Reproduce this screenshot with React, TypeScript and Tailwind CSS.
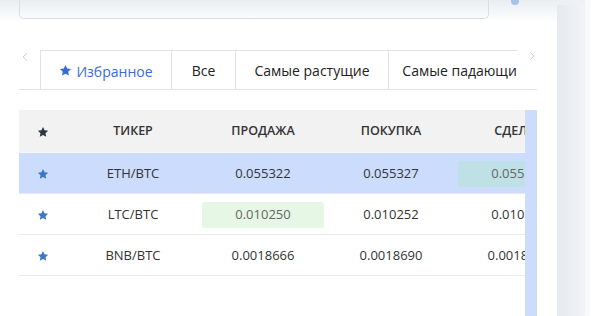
import { ReactNode } from "react";

const Star = ({ className }: { className: string }) => (
  <svg viewBox="0 0 24 24" className={className} fill="currentColor">
    <path d="M12 1.8l3.1 6.6 7.2.9-5.3 5 1.4 7.1L12 17.9l-6.4 3.5 1.4-7.1-5.3-5 7.2-.9z" />
  </svg>
);

const tabs = [
  { label: "Избранное", w: "w-[132px]", active: true },
  { label: "Все", w: "w-[64px]" },
  { label: "Самые растущие", w: "w-[153px]" },
  { label: "Самые падающие", w: "w-[150px]" },
];

type Row = {
  pair: string;
  sell: string;
  buy: string;
  deal: string;
  selected?: boolean;
  sellHi?: boolean;
  dealHi?: boolean;
};

const rows: Row[] = [
  { pair: "ETH/BTC", sell: "0.055322", buy: "0.055327", deal: "0.055325", selected: true, dealHi: true },
  { pair: "LTC/BTC", sell: "0.010250", buy: "0.010252", deal: "0.010251", sellHi: true },
  { pair: "BNB/BTC", sell: "0.0018666", buy: "0.0018690", deal: "0.0018680" },
];

const Cell = ({ w, children, hi }: { w: string; children: ReactNode; hi?: string }) => (
  <div className={`${w} shrink-0 flex items-center justify-center px-[3px]`}>
    {hi ? (
      <div className={`w-full h-[26px] rounded-[3px] flex items-center justify-center text-[#666] ${hi}`}>
        {children}
      </div>
    ) : (
      children
    )}
  </div>
);

export default function App() {
  return (
    <div
      className="w-[591px] h-[316px] overflow-hidden flex bg-white text-[#333]"
      style={{ fontFamily: '"Open Sans", "Noto Sans", sans-serif' }}
    >
      <div className="w-[557px] shrink-0 flex flex-col">
        {/* top bar with search field */}
        <div className="h-[22px] bg-gradient-to-b from-[#e9edf1] to-white flex items-end pl-[19px]">
          <div className="relative w-[470px] h-[24px] -mt-[2px] border border-[#dadde2] border-t-0 rounded-b-[5px] mb-[3px]">
            <div className="absolute left-[29px] -top-[1px] w-[5px] h-[3px] rounded-b-full bg-[#b9c4d2]" />
          </div>
          <div className="relative w-[10px] h-[22px] ml-[22px]">
            <div className="absolute left-[0px] top-[0px] w-[8px] h-[5px] rounded-b-full bg-[#a9c2ea]" />
          </div>
        </div>

        {/* tabs */}
        <div className="mt-[28px] ml-[19px] w-[518px] h-[40px] flex border-b border-[#dfe2e7]">
          <div className="w-[21px] shrink-0 flex items-start justify-start pt-[2px] pl-[3px]">
            <svg viewBox="0 0 8 12" className="w-[6px] h-[10px] text-[#b6bcc6]" fill="none" stroke="currentColor" strokeWidth="1">
              <path d="M6.5 1L1.5 6l5 5" />
            </svg>
          </div>
          <div className="w-[477px] shrink-0 overflow-hidden flex">
            {tabs.map((t, i) => (
              <div
                key={t.label}
                className={`${t.w} shrink-0 h-[40px] flex items-center justify-center gap-[4px] text-[14px] border-t border-r border-[#dfe2e7] ${
                  i === 0 ? "border-l bg-white text-[#3a6bd6] h-[41px] relative z-10" : "text-[#222]"
                } whitespace-nowrap`}
              >
                {t.active && <Star className="w-[13px] h-[13px] -mt-[1px]" />}
                {t.label}
              </div>
            ))}
          </div>
          <div className="w-[20px] shrink-0 flex items-start justify-start pt-[1px] pl-[12px]">
            <svg viewBox="0 0 8 12" className="w-[6px] h-[10px] text-[#aab8d0]" fill="none" stroke="currentColor" strokeWidth="1">
              <path d="M1.5 1l5 5-5 5" />
            </svg>
          </div>
        </div>

        {/* table */}
        <div className="mt-[20px] ml-[19px] flex flex-1">
          <div className="w-[506px] shrink-0 overflow-hidden">
            <div className="w-[700px] text-[13px]">
              <div className="h-[43px] flex bg-[#f2f2f2] font-semibold text-[12.5px] text-[#333] border-b border-[#f7f7f7] pt-[1px]">
                <Cell w="w-[48px]">
                  <Star className="w-[12px] h-[12px] text-[#2f3542]" />
                </Cell>
                <Cell w="w-[132px]">ТИКЕР</Cell>
                <Cell w="w-[128px]">ПРОДАЖА</Cell>
                <Cell w="w-[128px]">ПОКУПКА</Cell>
                <Cell w="w-[128px]">СДЕЛКА</Cell>
                <Cell w="w-[128px]">ОБЪЁМ</Cell>
              </div>
              {rows.map((r) => (
                <div
                  key={r.pair}
                  className={`h-[41px] pt-[2px] flex border-b border-[#e9ebee] ${r.selected ? "bg-[#ccdcfd]" : "bg-white"}`}
                >
                  <Cell w="w-[48px]">
                    <Star className="w-[12px] h-[12px] text-[#3b78c4]" />
                  </Cell>
                  <Cell w="w-[132px]">{r.pair}</Cell>
                  <Cell w="w-[128px]" hi={r.sellHi ? "bg-[#e6f7e5]" : undefined}>
                    {r.sell}
                  </Cell>
                  <Cell w="w-[128px]">{r.buy}</Cell>
                  <Cell w="w-[128px]" hi={r.dealHi ? "bg-[#bfe0e5]" : undefined}>
                    {r.deal}
                  </Cell>
                  <Cell w="w-[128px]">12.5</Cell>
                </div>
              ))}
            </div>
          </div>
          <div className="w-[12px] shrink-0 bg-[#ccdcfd]" />
        </div>
      </div>
      <div className="w-[28px] shrink-0 bg-gradient-to-r from-[#e6eaef] to-[#f1f3f6] border-t-[5px] border-[#eef0f3]" />
      <div className="flex-1 bg-[#f9fafb]" />
    </div>
  );
}
